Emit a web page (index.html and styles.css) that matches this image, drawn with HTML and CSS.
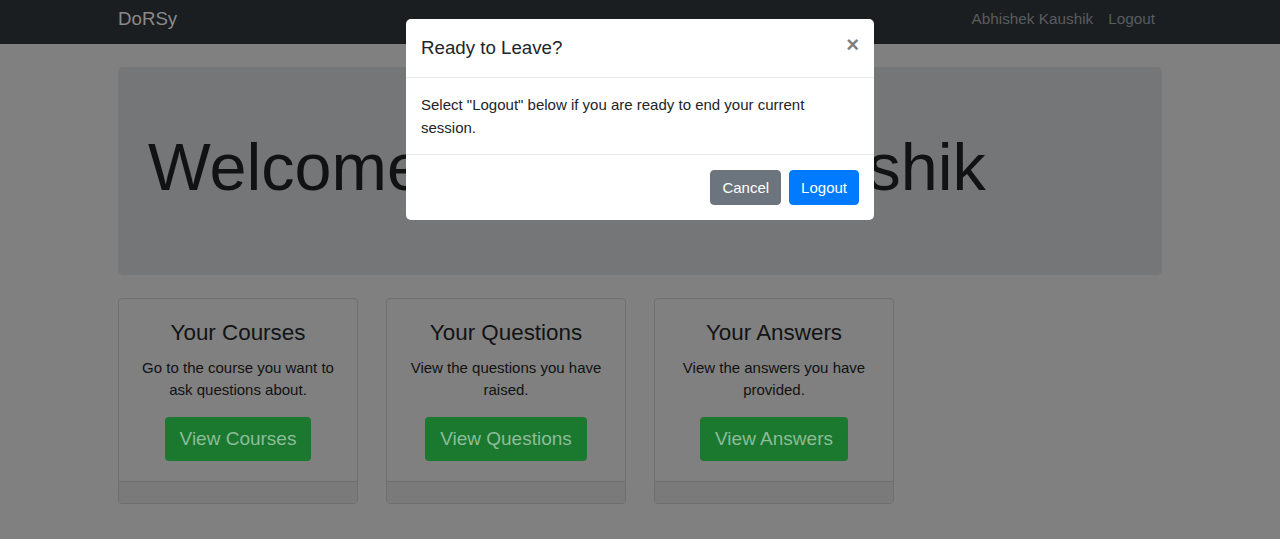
FILE: index.html
```html
<!DOCTYPE html>
<html lang="en">
<head>
<meta charset="utf-8">
<title>DoRSy</title>
<link rel="stylesheet" href="styles.css">
</head>
<body>
<nav class="navbar">
  <div class="container nav-inner">
    <a class="brand" href="#">DoRSy</a>
    <ul class="nav-links">
      <li><a href="#">Abhishek Kaushik</a></li>
      <li><a href="#">Logout</a></li>
    </ul>
  </div>
</nav>

<main class="container">
  <section class="jumbotron">
    <h1 class="display">Welcome, Abhishek Kaushik</h1>
  </section>

  <div class="cards">
    <div class="card">
      <div class="card-body">
        <h4 class="card-title">Your Courses</h4>
        <p class="card-text">Go to the course you want to ask questions about.</p>
        <a class="btn-success" href="#">View Courses</a>
      </div>
      <div class="card-footer"></div>
    </div>
    <div class="card">
      <div class="card-body">
        <h4 class="card-title">Your Questions</h4>
        <p class="card-text">View the questions you have raised.</p>
        <a class="btn-success" href="#">View Questions</a>
      </div>
      <div class="card-footer"></div>
    </div>
    <div class="card">
      <div class="card-body">
        <h4 class="card-title">Your Answers</h4>
        <p class="card-text">View the answers you have provided.</p>
        <a class="btn-success" href="#">View Answers</a>
      </div>
      <div class="card-footer"></div>
    </div>
  </div>
</main>

<div class="modal">
  <div class="modal-header">
    <h5 class="modal-title">Ready to Leave?</h5>
    <button class="close" type="button">&times;</button>
  </div>
  <div class="modal-body">Select "Logout" below if you are ready to end your current session.</div>
  <div class="modal-footer">
    <button class="btn btn-secondary" type="button">Cancel</button>
    <a class="btn btn-primary" href="#">Logout</a>
  </div>
</div>
</body>
</html>
```

FILE: styles.css
```css
* { box-sizing: border-box; }

html, body {
  margin: 0;
  padding: 0;
}

body {
  background: #808080;
  font-family: "Liberation Sans", Arial, sans-serif;
  color: #111213;
  height: 539px;
  overflow: hidden;
}

a { text-decoration: none; }

.container {
  width: 1044px;
  margin: 0 auto;
}

/* Navbar */
.navbar {
  background: #1b1e21;
  height: 44px;
}

.nav-inner {
  display: flex;
  align-items: flex-start;
  justify-content: space-between;
  padding-top: 7px;
}

.brand {
  font-size: 18.7px;
  line-height: 23px;
  color: #898a8b;
}

.nav-links {
  list-style: none;
  margin: 0;
  padding: 0;
  display: flex;
}

.nav-links a {
  display: block;
  font-size: 15.3px;
  line-height: 23px;
  padding: 0 7.5px;
  color: #5a5c5e;
}

.nav-links li:last-child a { padding-right: 7px; }

/* Jumbotron */
.jumbotron {
  margin-top: 23px;
  height: 208px;
  background: #757677;
  border-radius: 5px;
  padding: 67px 30px 0;
}

.display {
  margin: 0;
  font-size: 66.5px;
  line-height: 66px;
  font-weight: 400;
  color: #111213;
  white-space: nowrap;
}

/* Cards */
.cards {
  margin-top: 23px;
  display: grid;
  grid-template-columns: repeat(4, 240px);
  column-gap: 28px;
}

.card {
  border: 1px solid #6e6f70;
  border-radius: 4px;
  display: flex;
  flex-direction: column;
  overflow: hidden;
}

.card-body {
  padding: 20px 19px 20px;
  text-align: center;
}

.card-title {
  margin: 0 0 11px;
  font-size: 22.4px;
  line-height: 27px;
  font-weight: 400;
  color: #121314;
}

.card-text {
  margin: 0 0 16px;
  font-size: 15px;
  line-height: 22px;
  color: #111213;
}

.btn-success {
  display: inline-flex;
  align-items: center;
  height: 44px;
  padding: 0 15px;
  border-radius: 4px;
  background: #1a782f;
  color: #8dbd98;
  font-size: 19px;
}

.card-footer {
  height: 22px;
  border-top: 1px solid #6e6f70;
  background: #7a7a7a;
}

/* Modal (overlays the page) */
.modal {
  position: absolute;
  left: 406px;
  top: 19px;
  width: 468px;
  background: #ffffff;
  border-radius: 5px;
  color: #212529;
}

.modal-header {
  display: flex;
  align-items: flex-start;
  padding: 15px 15px;
  border-bottom: 1px solid #e9ecef;
  height: 59px;
}

.modal-title {
  margin: 0;
  font-size: 18.7px;
  line-height: 28px;
  font-weight: 400;
}

.close {
  margin-left: auto;
  border: 0;
  background: none;
  padding: 0;
  font-family: "Liberation Sans", Arial, sans-serif;
  font-size: 22px;
  font-weight: 700;
  line-height: 22px;
  color: #000;
  opacity: 0.5;
}

.modal-body {
  padding: 15px;
  font-size: 15px;
  line-height: 23px;
}

.modal-footer {
  display: flex;
  justify-content: flex-end;
  gap: 8px;
  padding: 15px;
  border-top: 1px solid #e9ecef;
}

.btn {
  display: inline-flex;
  align-items: center;
  height: 35px;
  padding: 0 11px;
  border: 1px solid transparent;
  border-radius: 4px;
  font-family: "Liberation Sans", Arial, sans-serif;
  font-size: 15px;
  color: #ffffff;
}

.btn-secondary {
  background: #6c757d;
  border-color: #6c757d;
}

.btn-primary {
  background: #007bff;
  border-color: #007bff;
}
```
